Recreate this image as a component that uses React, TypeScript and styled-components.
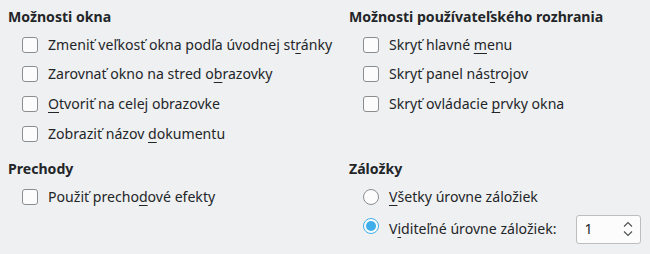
import React from "react";
import styled, { createGlobalStyle } from "styled-components";

const Global = createGlobalStyle`
  html, body { margin: 0; padding: 0; background: #eff0f1; }
  body { font-family: "Noto Sans", "DejaVu Sans", sans-serif; color: #232629; }
`;

const Page = styled.div`
  width: 650px;
  height: 254px;
  box-sizing: border-box;
  padding: 7px 8px 0 8px;
  display: grid;
  grid-template-columns: 341px 1fr;
  grid-template-rows: auto auto;
  align-content: start;
  row-gap: 10.3px;
  background: #eff0f1;
`;

const Group = styled.section`
  display: flex;
  flex-direction: column;
  gap: 3px;
`;

const Heading = styled.div`
  font-size: 14.1px;
  font-weight: 700;
  line-height: 20px;
  height: 20px;
  white-space: nowrap;
`;

const List = styled.div`
  display: flex;
  flex-direction: column;
  padding-left: 14px;
`;

const Row = styled.label<{ $padTop?: number }>`
  display: flex;
  align-items: center;
  gap: 10px;
  height: 29.67px;
  box-sizing: content-box;
  padding-top: ${(p) => p.$padTop ?? 0}px;
  font-size: 14.1px;
  line-height: 20px;
  white-space: nowrap;
`;

const Box = styled.span`
  flex: none;
  width: 16px;
  height: 16px;
  box-sizing: border-box;
  border: 1px solid #8b8d8f;
  border-radius: 3px;
  background: #fcfcfc;
`;

const Radio = styled.span<{ $checked?: boolean; $raise?: number }>`
  flex: none;
  position: relative;
  width: 16px;
  height: 16px;
  box-sizing: border-box;
  border-radius: 50%;
  border: 1px solid ${(p) => (p.$checked ? "#3daee9" : "#8b8d8f")};
  background: #fcfcfc;
  margin-bottom: ${(p) => p.$raise ?? 0}px;
  &::after {
    content: "";
    display: ${(p) => (p.$checked ? "block" : "none")};
    position: absolute;
    left: 2px;
    top: 2px;
    width: 10px;
    height: 10px;
    border-radius: 50%;
    background: #3daee9;
  }
`;

const Mn = styled.span`
  text-decoration: underline;
  text-decoration-thickness: 1px;
  text-underline-offset: 2.5px;
`;

const Spin = styled.div`
  margin-left: 10px;
  width: 65px;
  height: 29px;
  box-sizing: border-box;
  border: 1px solid #bcbebf;
  border-radius: 3px;
  background: #fcfcfc;
  display: flex;
  align-items: center;
  justify-content: space-between;
  padding: 0 6px 0 7px;
  font-size: 14.1px;
`;

const Arrows = styled.svg`
  width: 12px;
  height: 20px;
`;

const Check = ({ children }: { children: React.ReactNode }) => (
  <Row>
    <Box />
    <span>{children}</span>
  </Row>
);

export default function App() {
  return (
    <>
      <Global />
      <Page>
        <Group>
          <Heading>Možnosti okna</Heading>
          <List>
            <Check>
              Zmeniť veľkosť okna podľa úvodnej st<Mn>r</Mn>ánky
            </Check>
            <Check>
              Zarovnať okno na stred o<Mn>b</Mn>razovky
            </Check>
            <Check>
              <Mn>O</Mn>tvoriť na celej obrazovke
            </Check>
            <Check>
              Zobraziť názov <Mn>d</Mn>okumentu
            </Check>
          </List>
        </Group>
        <Group>
          <Heading>Možnosti používateľského rozhrania</Heading>
          <List>
            <Check>
              Skryť hlavné <Mn>m</Mn>enu
            </Check>
            <Check>
              Skryť panel nás<Mn>t</Mn>rojov
            </Check>
            <Check>
              Skryť ovládacie <Mn>p</Mn>rvky okna
            </Check>
          </List>
        </Group>
        <Group>
          <Heading>Prechody</Heading>
          <List>
            <Check>
              Použiť precho<Mn>d</Mn>ové efekty
            </Check>
          </List>
        </Group>
        <Group>
          <Heading>Záložky</Heading>
          <List>
            <Row>
              <Radio />
              <span>
                <Mn>V</Mn>šetky úrovne záložiek
              </span>
            </Row>
            <Row $padTop={3}>
              <Radio $checked $raise={7} />
              <span>
                V<Mn>i</Mn>diteľné úrovne záložiek:
              </span>
              <Spin>
                <span>1</span>
                <Arrows viewBox="0 0 12 20" fill="none" stroke="#4d5052" strokeWidth="1.1">
                  <polyline points="2,7.5 6,3.5 10,7.5" />
                  <polyline points="2,12.5 6,16.5 10,12.5" />
                </Arrows>
              </Spin>
            </Row>
          </List>
        </Group>
      </Page>
    </>
  );
}
